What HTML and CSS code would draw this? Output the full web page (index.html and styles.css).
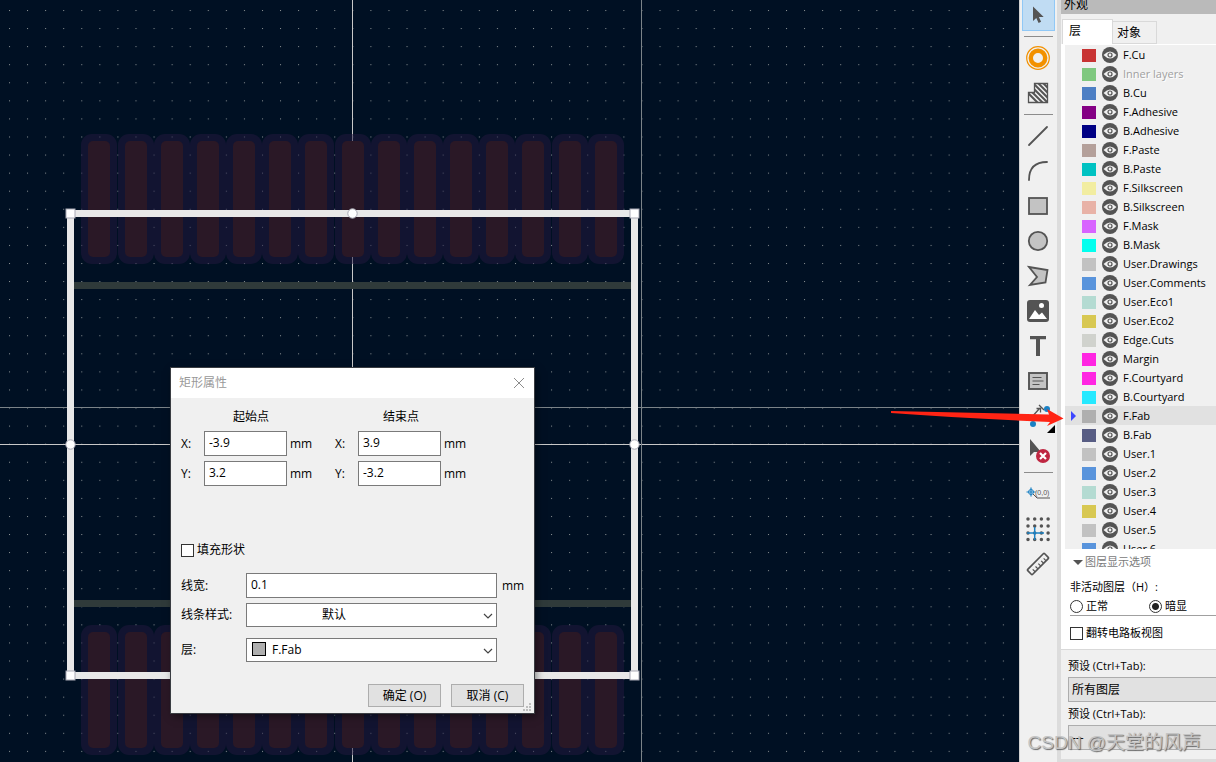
FILE: index.html
```html
<!DOCTYPE html>
<html lang="zh-CN">
<head>
<meta charset="utf-8">
<title>PCB 编辑器</title>
<link rel="stylesheet" href="styles.css">
</head>
<body>
<svg class="defs" aria-hidden="true">
  <defs>
    <symbol id="eye" viewBox="0 0 16 16"><circle cx="8" cy="8" r="8" fill="#545454"/><path d="M1.5 8Q8 1 14.500 8Q8 15 1.500 8Z" fill="#f0f0f0"/><circle cx="8" cy="8" r="2" fill="#f0f0f0" stroke="#545454" stroke-width="1.200"/></symbol>
    <symbol id="chev" viewBox="0 0 10 6"><path d="M1 1l4 4 4-4" fill="none" stroke="#444" stroke-width="1.200"/></symbol>
  </defs>
</svg>
<div class="app">
  <main class="board">
    <svg class="drawing" width="100%" height="100%" aria-label="封装画布">
      <defs>
        <pattern id="grid" x="9" y="10" width="18.070" height="18.070" patternUnits="userSpaceOnUse"><rect width="1" height="1" fill="#8d9496"/></pattern>
        <g id="pad"><rect width="36" height="130" rx="11" fill="#22183f" fill-opacity=".52"/><rect x="7" y="7" width="22" height="116" rx="5" fill="#2a1826"/></g>
        <g id="pads">
          <use href="#pad" x="81"/><use href="#pad" x="118"/><use href="#pad" x="154"/><use href="#pad" x="190"/><use href="#pad" x="226"/><use href="#pad" x="262"/><use href="#pad" x="298"/><use href="#pad" x="335"/><use href="#pad" x="371"/><use href="#pad" x="407"/><use href="#pad" x="443"/><use href="#pad" x="479"/><use href="#pad" x="515"/><use href="#pad" x="552"/><use href="#pad" x="588"/>
        </g>
      </defs>
      <rect width="100%" height="100%" fill="url(#grid)"/>
      <rect x="352" width="1" height="100%" fill="#c8c8c8"/>
      <rect y="444" width="100%" height="1" fill="#c8c8c8"/>
      <use href="#pads" y="134"/>
      <use href="#pads" y="625"/>
      <path d="M74 285.500H631M74 603.500H631" stroke="#2f3a3a" stroke-width="7"/>
      <rect y="407" width="100%" height="1" fill="#7b8388"/>
      <rect x="641" width="1" height="100%" fill="#7b8388"/>
      <rect x="70.500" y="213.500" width="564" height="462" fill="none" stroke="#e8e8e8" stroke-width="7"/>
      <g fill="#fff" stroke="#a9a9b5" stroke-width="1">
        <rect x="66" y="209" width="9" height="9"/><rect x="630" y="209" width="9" height="9"/><rect x="66" y="671" width="9" height="9"/><rect x="630" y="671" width="9" height="9"/>
        <circle cx="352.500" cy="213.500" r="4.700"/><circle cx="70.500" cy="444.500" r="4.700"/><circle cx="634.500" cy="444.500" r="4.700"/>
      </g>
    </svg>

    <form class="dialog">
      <header class="dialog-title"><span>矩形属性</span>
        <button type="button" class="close" aria-label="关闭"><svg width="12" height="12"><path d="M1 1l10 10M11 1L1 11" stroke="#8c8c8c"/></svg></button>
      </header>
      <div class="dialog-body">
        <div class="points">
          <fieldset class="point start"><legend>起始点</legend>
            <div class="coord"><label for="sx">X:</label><input id="sx" value="-3.9"><span>mm</span></div>
            <div class="coord"><label for="sy">Y:</label><input id="sy" value="3.2"><span>mm</span></div>
          </fieldset>
          <fieldset class="point"><legend>结束点</legend>
            <div class="coord"><label for="ex">X:</label><input id="ex" value="3.9"><span>mm</span></div>
            <div class="coord"><label for="ey">Y:</label><input id="ey" value="-3.2"><span>mm</span></div>
          </fieldset>
        </div>
        <label class="check"><input type="checkbox">填充形状</label>
        <div class="field"><label for="lw">线宽:</label><input id="lw" value="0.1"><span>mm</span></div>
        <div class="field"><label for="ls">线条样式:</label>
          <span class="combo"><select id="ls" class="centered"><option>默认</option></select><svg class="chev"><use href="#chev"/></svg></span></div>
        <div class="field layer-field"><label for="ly">层:</label>
          <span class="combo"><i class="chip"></i><select id="ly" class="with-chip"><option>F.Fab</option></select><svg class="chev"><use href="#chev"/></svg></span></div>
        <div class="actions"><button type="button">确定 (O)</button><button type="button">取消 (C)</button></div>
      </div>
      <svg class="grip" width="9" height="9" fill="#bdbdbd"><path d="M6 0h2v2h-2zM3 3h2v2h-2zM6 3h2v2h-2zM0 6h2v2h-2zM3 6h2v2h-2zM6 6h2v2h-2z"/></svg>
    </form>
  </main>

  <nav class="tools" aria-label="工具栏">
    <button class="active" aria-label="选择"><svg width="24" height="24"><path d="M7 3.500V18l3.300-3 2.300 5 2.500-1.200-2.200-4.800h4.800z" fill="#545454"/></svg></button>
    <hr class="first">
    <button aria-label="焊盘"><svg width="24" height="24" fill="none" stroke="#f29100"><circle cx="12" cy="12" r="11.300" stroke-width="1.200"/><circle cx="12" cy="12" r="7.200" stroke-width="4.400"/></svg></button>
    <button aria-label="规则区域"><svg width="24" height="24" fill="none" stroke="#545454"><clipPath id="zc"><path d="M2.500 11.500h6v-9h13v19h-19z"/></clipPath><g clip-path="url(#zc)"><path d="M-10 0l24 24M-5 0l24 24M0 0l24 24M5 0l24 24M10 0l24 24M15 0l24 24" stroke-width="2"/></g><path d="M2.500 11.500h6v-9h13v19h-19z" stroke-width="1.300"/></svg></button>
    <hr>
    <button aria-label="直线"><svg width="24" height="24"><path d="M3 21L21 3" stroke="#545454" stroke-width="1.800" stroke-linecap="round"/></svg></button>
    <button aria-label="圆弧"><svg width="24" height="24"><path d="M3 21Q3 3 21 3" fill="none" stroke="#545454" stroke-width="1.800" stroke-linecap="round"/></svg></button>
    <button aria-label="矩形"><svg width="24" height="24"><rect x="3" y="4" width="18" height="16" fill="#c3c3c3" stroke="#545454" stroke-width="1.800"/></svg></button>
    <button aria-label="圆"><svg width="24" height="24"><circle cx="12" cy="12" r="9.200" fill="#c3c3c3" stroke="#545454" stroke-width="1.800"/></svg></button>
    <button aria-label="多边形"><svg width="24" height="24"><path d="M3 3l18.500 3-2 12.500L4 21l7-8z" fill="#c3c3c3" stroke="#545454" stroke-width="1.800"/></svg></button>
    <button aria-label="图像"><svg width="24" height="24"><rect x="1" y="1" width="22" height="22" rx="3" fill="#545454"/><circle cx="15.500" cy="6.500" r="2.500" fill="#fff"/><path d="M3 20l6-9 4 5 3-2.500 5 6.500z" fill="#fff"/></svg></button>
    <button aria-label="文本"><svg width="24" height="24"><path d="M4 2h16v3.200h-6V22h-4V5.200H4z" fill="#545454"/></svg></button>
    <button aria-label="文本框"><svg width="24" height="24" stroke="#545454"><rect x="3" y="4" width="18" height="16" fill="#c3c3c3" stroke-width="1.900"/><path d="M6.500 8.500h9M6.500 12h11M6.500 15.500h7" stroke-width="1.200"/></svg></button>
    <button aria-label="尺寸标注"><svg width="32" height="32"><path d="M8 19l10-11M14.500 8.500h4v4M17 5l5 5" fill="none" stroke="#545454" stroke-width="1.300"/><circle cx="25" cy="9" r="3" fill="#1a81c4"/><circle cx="11" cy="24" r="3" fill="#1a81c4"/><path d="M33 25v8h-8z"/></svg></button>
    <button aria-label="删除"><svg width="24" height="24"><path d="M4 0v17l4-4 7 0z" fill="#545454"/><circle cx="17" cy="17" r="7" fill="#bf2641"/><path d="M14 14l6 6M20 14l-6 6" stroke="#fff" stroke-width="2.200"/></svg></button>
    <hr>
    <button aria-label="原点"><svg width="24" height="24"><path d="M.5 10h9M5 5.500v9" stroke="#1a81c4" stroke-width="1.200"/><circle cx="5" cy="10" r="2.500" fill="none" stroke="#1a81c4"/><path d="M7 12l4 4h13" fill="none" stroke="#545454"/><text class="origin" x="9" y="13">(0,0)</text></svg></button>
    <button aria-label="栅格原点"><svg width="26" height="26"><path d="M3 3h22M3 10h22M3 17h22M3 23.500h22" stroke="#545454" stroke-width="3.500" stroke-linecap="round" stroke-dasharray="0 6.700"/><path d="M2 17h17M9.700 11v13" stroke="#1a81c4" stroke-width="1.500"/></svg></button>
    <button aria-label="测量"><svg width="24" height="24"><g transform="rotate(-45 12 12)" fill="none" stroke="#545454" stroke-width="1.700"><rect x="0" y="8.500" width="24" height="7" rx="1"/><path d="M4.500 15.500v-3.500M8.500 15.500v-3.500M12.500 15.500v-3.500M16.500 15.500v-3.500M20 15.500v-3.500" stroke-width="1.200"/></g></svg></button>
  </nav>

  <aside class="panel">
    <h2 class="panel-title"><span>外观</span></h2>
    <div class="tabs" role="tablist"><button role="tab" class="tab selected">层</button><button role="tab" class="tab">对象</button></div>
    <ul class="layers">
      <li><i style="background:#c83434"></i><svg><use href="#eye"/></svg>F.Cu</li>
      <li class="muted"><i style="background:#7fc87f"></i><svg><use href="#eye"/></svg>Inner layers</li>
      <li><i style="background:#4d7fc4"></i><svg><use href="#eye"/></svg>B.Cu</li>
      <li><i style="background:#840084"></i><svg><use href="#eye"/></svg>F.Adhesive</li>
      <li><i style="background:#000084"></i><svg><use href="#eye"/></svg>B.Adhesive</li>
      <li><i style="background:#b4a09a"></i><svg><use href="#eye"/></svg>F.Paste</li>
      <li><i style="background:#00c2c2"></i><svg><use href="#eye"/></svg>B.Paste</li>
      <li><i style="background:#f2eda1"></i><svg><use href="#eye"/></svg>F.Silkscreen</li>
      <li><i style="background:#e8b2a7"></i><svg><use href="#eye"/></svg>B.Silkscreen</li>
      <li><i style="background:#d864ff"></i><svg><use href="#eye"/></svg>F.Mask</li>
      <li><i style="background:#02ffee"></i><svg><use href="#eye"/></svg>B.Mask</li>
      <li><i style="background:#c2c2c2"></i><svg><use href="#eye"/></svg>User.Drawings</li>
      <li><i style="background:#5994dc"></i><svg><use href="#eye"/></svg>User.Comments</li>
      <li><i style="background:#b4dbd2"></i><svg><use href="#eye"/></svg>User.Eco1</li>
      <li><i style="background:#d8c852"></i><svg><use href="#eye"/></svg>User.Eco2</li>
      <li><i style="background:#d0d2cd"></i><svg><use href="#eye"/></svg>Edge.Cuts</li>
      <li><i style="background:#ff26e2"></i><svg><use href="#eye"/></svg>Margin</li>
      <li><i style="background:#ff26e2"></i><svg><use href="#eye"/></svg>F.Courtyard</li>
      <li><i style="background:#26e9ff"></i><svg><use href="#eye"/></svg>B.Courtyard</li>
      <li class="current"><i style="background:#afafaf"></i><svg><use href="#eye"/></svg>F.Fab</li>
      <li><i style="background:#585d84"></i><svg><use href="#eye"/></svg>B.Fab</li>
      <li><i style="background:#c2c2c2"></i><svg><use href="#eye"/></svg>User.1</li>
      <li><i style="background:#5994dc"></i><svg><use href="#eye"/></svg>User.2</li>
      <li><i style="background:#b4dbd2"></i><svg><use href="#eye"/></svg>User.3</li>
      <li><i style="background:#d8c852"></i><svg><use href="#eye"/></svg>User.4</li>
      <li><i style="background:#c2c2c2"></i><svg><use href="#eye"/></svg>User.5</li>
      <li><i style="background:#5994dc"></i><svg><use href="#eye"/></svg>User.6</li>
    </ul>
    <section class="display">
      <h3>图层显示选项</h3>
      <p>非活动图层（H）:</p>
      <div class="radios"><label><input type="radio" name="dim">正常</label><label><input type="radio" name="dim" checked>暗显</label></div>
      <label class="check flip"><input type="checkbox">翻转电路板视图</label>
    </section>
    <section class="presets">
      <label for="p1">预设 (Ctrl+Tab):</label>
      <select id="p1"><option>所有图层</option></select>
      <label for="p2">预设 (Ctrl+Tab):</label>
      <select id="p2"><option>---</option></select>
    </section>
  </aside>
  <svg class="arrow" width="173" height="22"><path d="M0 6L158 9.500 156 4 172.500 13.500 156 21 159 17Q70 13 0 8z" fill="#ff2414"/></svg>
  <div class="watermark">CSDN @天堂的风声</div>
</div>
</body>
</html>
```

FILE: styles.css
```css
* { box-sizing: border-box; }
body {
  margin: 0;
  font: 12px/18px "Open Sans", "Noto Sans CJK SC", sans-serif;
  color: #000;
  overflow: hidden;
}
button, input, select { font: inherit; color: inherit; }
.defs { position: absolute; width: 0; height: 0; }
.app { position: relative; display: flex; height: 100vh; overflow: hidden; }

.board { position: relative; flex: 1; min-width: 0; background: #001023; overflow: hidden; }
.drawing { display: block; }

.dialog {
  position: absolute;
  left: 171px;
  top: 368px;
  width: 363px;
  background: #f0f0f0;
  box-shadow: 0 0 0 1px #3a3d42, 2px 3px 8px rgba(0, 0, 0, .5);
}
.dialog-title {
  display: flex;
  align-items: center;
  justify-content: space-between;
  height: 30px;
  padding: 0 9px 0 8px;
  background: #fff;
  color: #999;
}
.close { display: flex; padding: 0; border: 0; background: none; }
.dialog-body { padding: 10px 10px 6px; }
.points { display: flex; gap: 22px; }
.point { width: 132px; margin: 0; padding: 0; border: 0; }
.point legend { width: 100%; padding: 0 0 5px; text-align: center; }
.start legend { padding-left: 8px; }
.coord { display: flex; align-items: center; height: 25px; margin-bottom: 5px; }
.coord label { width: 23px; }
.coord input { width: 83px; margin-right: 3px; }
.coord input, .field input {
  height: 25px;
  padding: 0 4px 2px;
  border: 1px solid #7a7a7a;
  background: #fff;
}
.check { display: flex; align-items: center; gap: 3px; }
.check input {
  appearance: none;
  width: 13px;
  height: 13px;
  margin: 0;
  border: 1px solid #333;
  background: #fff;
}
.points + .check { margin: 50px 0 14px; }
.field { display: grid; grid-template-columns: 60px 1fr 22px; align-items: center; column-gap: 5px; margin-bottom: 5px; }
.combo { position: relative; display: block; }
.combo select {
  display: block;
  appearance: none;
  width: 100%;
  height: 24px;
  border: 1px solid #7a7a7a;
  border-radius: 0;
  background: #fff;
}
.combo .centered { padding: 0 75px; }
.combo .with-chip { padding: 0 25px; }
.chev { position: absolute; right: 4px; top: 10px; width: 10px; height: 6px; }
.chip { position: absolute; left: 6px; top: 4px; width: 14px; height: 14px; border: 1px solid #000; background: #afafaf; }
.layer-field { margin-top: 11px; }
.actions { display: flex; justify-content: flex-end; gap: 10px; margin-top: 22px; }
.actions button { width: 73px; height: 23px; padding: 0; border: 1px solid #adadad; background: #e1e1e1; line-height: 20px; }
.grip { position: absolute; right: 2px; bottom: 1px; }

.tools {
  display: flex;
  flex-direction: column;
  align-items: stretch;
  width: 38px;
  padding: 0 2px;
  flex: none;
  background: #f0f0f0;
  border-left: 1px solid #d0d0d0;
}
.tools button { display: flex; align-items: center; justify-content: center; flex: none; height: 35px; padding: 0 2px 0 0; border: 0; background: none; }
.tools button svg { flex: none; overflow: visible; }
.tools .active { height: 31px; border: 1px solid #90c8f6; border-top: 0; background: #c0dcf3; }
.tools hr { flex: none; width: 29px; height: 1px; margin: 4px auto 3px; border: 0; background: #8c8c8c; }
.tools .first { margin-top: 5px; }
.origin { font: 7px "Liberation Sans", sans-serif; fill: #545454; }

.panel {
  display: flex;
  flex-direction: column;
  flex: none;
  width: 159px;
  border-left: 4px solid #dcdcdc;
  border-bottom: 3px solid #dcdcdc;
  background: #f0f0f0;
}
.panel-title {
  display: flex;
  align-items: flex-end;
  flex: none;
  height: 14px;
  margin: 0;
  padding: 0 3px;
  background: #bababa;
  font-size: 12px;
  font-weight: 400;
  overflow: hidden;
}
.tabs { display: flex; align-items: flex-end; flex: none; height: 31px; padding-left: 1px; border-bottom: 1px solid #fff; }
.tab { width: 44px; height: 23px; padding: 0 4px; border: 1px solid #d9d9d9; border-left: 0; background: #f0f0f0; text-align: left; }
.tab.selected { width: 51px; height: 25px; padding: 0 6px 2px; border-left: 1px solid #d9d9d9; border-bottom: 0; background: #fff; }
.layers { flex: 1; min-height: 0; margin: 0; padding: 0; border-left: 4px solid #fff; font-size: 11px; list-style: none; overflow: hidden; }
.layers li { position: relative; display: flex; align-items: center; height: 19px; padding: 1px 0 0 17px; white-space: nowrap; }
.layers i { width: 14px; height: 13px; margin-right: 6px; }
.layers svg { width: 16px; height: 16px; margin-right: 5px; }
.layers .muted { color: #a0a0a0; text-shadow: 1px 1px #fff; }
.layers .current { background: #e1e1e1; }
.current::before { content: ""; position: absolute; left: 6px; top: 5px; border: 5px solid transparent; border-left-color: #3d46ff; border-right: 0; }
.display {
  flex: none;
  height: 101px;
  padding: 4px 0 0 9px;
  border-bottom: 1px solid #d9d9d9;
  background: #fff;
  font-size: 11px;
}
.display h3 { display: flex; align-items: center; gap: 2px; margin: 0 0 7px 3px; font-size: 11px; font-weight: 400; color: #7a7a7a; }
.display h3::before { content: ""; border: 5px solid transparent; border-top-color: #545454; border-bottom: 0; }
.display p { margin: 0 0 1px; }
.radios { display: flex; gap: 41px; border-bottom: 1px solid #a0a0a0; }
.radios label { display: flex; align-items: center; gap: 3px; }
.radios input { appearance: none; width: 13px; height: 13px; margin: 0; border: 1px solid #333; border-radius: 50%; background: #fff; }
.radios input:checked { background: radial-gradient(circle, #222 3px, #fff 4px); }
.flip { margin-top: 8px; }
.presets { display: flex; flex-direction: column; flex: none; height: 109px; padding: 7px 0 0 7px; font-size: 11px; }
.presets select { appearance: none; height: 25px; margin: 2px 0 3px; padding: 0 3px; border: 1px solid #adadad; border-right: 0; border-radius: 0; background: #e1e1e1; font-size: 12px; }

.arrow { position: absolute; right: 152px; top: 405px; }
.watermark {
  position: absolute;
  right: 15px;
  bottom: 5px;
  font: 19px/28px "Liberation Sans", "Noto Sans CJK SC", sans-serif;
  color: #c4c4c4;
  text-shadow: 1px 1px 1px #666;
  white-space: nowrap;
}
```
